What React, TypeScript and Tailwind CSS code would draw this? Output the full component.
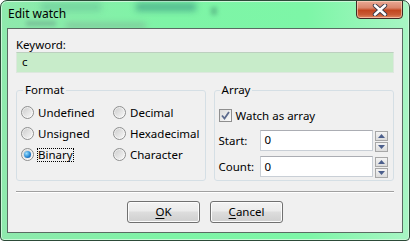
import React from 'react';

const font = { fontFamily: '"Noto Sans", "Liberation Sans", sans-serif' };

const Radio = ({ label, checked = false }: { label: string; checked?: boolean }) => (
  <div className="flex items-center h-[21px]">
    <span className="relative w-[13px] h-[13px] rounded-full border border-[#8e8f8f] bg-gradient-to-br from-[#e6e6e6] to-[#ffffff] flex items-center justify-center">
      <span className="w-[9px] h-[9px] rounded-full bg-gradient-to-br from-[#cfcfcf] to-[#f6f6f6] flex items-center justify-center">
        {checked && (
          <span className="w-[7px] h-[7px] rounded-full bg-[radial-gradient(circle_at_35%_35%,#9ee1ff,#2a8ad4_55%,#0b3f8f)]" />
        )}
      </span>
    </span>
    <span
      className={`ml-[3px] leading-[14px] px-[1px] ${
        checked ? 'outline outline-1 outline-dotted outline-black -outline-offset-1' : ''
      }`}
    >
      {label}
    </span>
  </div>
);

const Spinner = () => (
  <div className="flex flex-col gap-[1px] ml-[2px] mt-[1px]">
    {['up', 'down'].map((d) => (
      <div
        key={d}
        className="w-[13px] h-[10px] border border-[#a7a7a7] bg-gradient-to-b from-[#f4f4f4] to-[#dcdcdc] flex items-center justify-center"
      >
        <svg width="7" height="4" viewBox="0 0 7 4">
          {d === 'up' ? (
            <polygon points="3.5,0 7,4 0,4" fill="#4c5f8c" />
          ) : (
            <polygon points="0,0 7,0 3.5,4" fill="#4c5f8c" />
          )}
        </svg>
      </div>
    ))}
  </div>
);

const Button = ({ mnemonic, rest }: { mnemonic: string; rest: string }) => (
  <button className="w-[73px] h-[22px] rounded-[3px] border border-[#707070] bg-[linear-gradient(#f2f2f2_0%,#ebebeb_45%,#dddddd_50%,#cfcfcf_100%)] shadow-[inset_0_0_0_1px_#fcfcfc] text-[11.5px] text-black leading-[14px]">
    <span className="underline underline-offset-[2px]">{mnemonic}</span>
    {rest}
  </button>
);

export default function App() {
  return (
    <div className="w-[410px] h-[241px] bg-white text-[11.5px] text-black" style={font}>
      <div className="relative w-[410px] h-[241px] rounded-t-[7px] rounded-b-[4px] border border-[#2c4a38] bg-[linear-gradient(90deg,#8fe9ad_0%,#7ef4a6_40%,#7df6a7_75%,#a8f5c4_100%)] shadow-[inset_0_0_0_1px_#c9f8d8] overflow-hidden flex flex-col">
        {/* blurred glass background */}
        <div className="absolute left-[40px] top-[2px] w-[60px] h-[8px] bg-[#6cc79a] blur-[3px] opacity-70" />
        <div className="absolute left-[135px] top-[2px] w-[60px] h-[8px] bg-[#3f9e86] blur-[3px] opacity-70" />
        <div className="absolute left-[210px] top-[6px] w-[6px] h-[8px] bg-[#4da27a] blur-[2px] opacity-60" />
        <div className="absolute left-[25px] top-[20px] w-[30px] h-[5px] bg-[#6aa58a] blur-[2px] opacity-60" />
        <div className="absolute left-[65px] top-[22px] w-[80px] h-[5px] bg-[#7aa890] blur-[3px] opacity-60" />

        {/* title bar */}
        <div className="relative h-[27px] flex items-start">
          <span className="ml-[7px] mt-[5px] text-[12px] leading-[16px] text-black">Edit watch</span>
          <div className="ml-auto mr-[6px] mt-[-1px] w-[47px] h-[19px] rounded-b-[4px] border border-[#3e2a24] bg-[linear-gradient(#e9a995_0%,#d9866c_40%,#c2461f_55%,#c95a34_80%,#e18a63_100%)] shadow-[inset_0_0_0_1px_rgba(255,220,200,0.6)] flex items-center justify-center">
            <svg width="16" height="12" viewBox="0 0 16 12">
              <path d="M3 1.5 L13 10.5 M13 1.5 L3 10.5" stroke="#3a3a48" strokeWidth="4.4" strokeLinecap="round" />
              <path d="M3 1.5 L13 10.5 M13 1.5 L3 10.5" stroke="#ffffff" strokeWidth="2.6" strokeLinecap="round" />
            </svg>
          </div>
        </div>

        {/* client area */}
        <div className="relative mx-[6px] h-[205px] border border-[#5a6a62] bg-[#f0f0f0] px-[8px] pt-[9px] flex flex-col">
          <div className="leading-[14px]">Keyword:</div>
          <div className="h-[21px] border border-[#dde8de] border-t-[#bcd0bf] bg-[#c8ecca] px-[5px] leading-[18px]">
            c
          </div>

          <div className="mt-[10px] flex gap-[8px]">
            <fieldset className="w-[189px] h-[98px] border border-[#d5dfe5] rounded-[3px] px-[4px]">
              <legend className="ml-[2px] px-[2px] leading-[14px]">Format</legend>
              <div className="flex mt-[5px]">
                <div className="w-[92px] flex flex-col">
                  <Radio label="Undefined" />
                  <Radio label="Unsigned" />
                  <Radio label="Binary" checked />
                </div>
                <div className="flex flex-col">
                  <Radio label="Decimal" />
                  <Radio label="Hexadecimal" />
                  <Radio label="Character" />
                </div>
              </div>
            </fieldset>

            <fieldset className="w-[181px] h-[98px] border border-[#d5dfe5] rounded-[3px] px-[4px]">
              <legend className="ml-[1px] px-[2px] leading-[14px]">Array</legend>
              <div className="flex items-center h-[21px] mt-[8px]">
                <span className="w-[13px] h-[13px] border border-[#8f8f8f] bg-gradient-to-br from-[#dcdcdc] to-[#fbfbfb] flex items-center justify-center">
                  <svg width="9" height="9" viewBox="0 0 9 9">
                    <path d="M1 4.5 L3.5 7.5 L8 1" fill="none" stroke="#5c6b8e" strokeWidth="1.8" />
                  </svg>
                </span>
                <span className="ml-[4px] leading-[14px]">Watch as array</span>
              </div>
              <div className="flex items-start mt-[4px]">
                <span className="w-[41px] mt-[4px] leading-[14px]">Start:</span>
                <div className="w-[113px] h-[21px] border border-[#c9cfd6] border-t-[#abadb3] bg-white px-[4px] leading-[18px]">0</div>
                <Spinner />
              </div>
              <div className="flex items-start mt-[4px]">
                <span className="w-[41px] mt-[4px] leading-[14px]">Count:</span>
                <div className="w-[113px] h-[21px] border border-[#c9cfd6] border-t-[#abadb3] bg-white px-[4px] leading-[20px]">0</div>
                <Spinner />
              </div>
            </fieldset>
          </div>

          <div className="mt-[10px] h-[2px] border-t border-[#a0a0a0] border-b border-b-white" />

          <div className="mt-[8px] flex justify-center gap-[10px]">
            <Button mnemonic="O" rest="K" />
            <Button mnemonic="C" rest="ancel" />
          </div>
        </div>
      </div>
    </div>
  );
}
